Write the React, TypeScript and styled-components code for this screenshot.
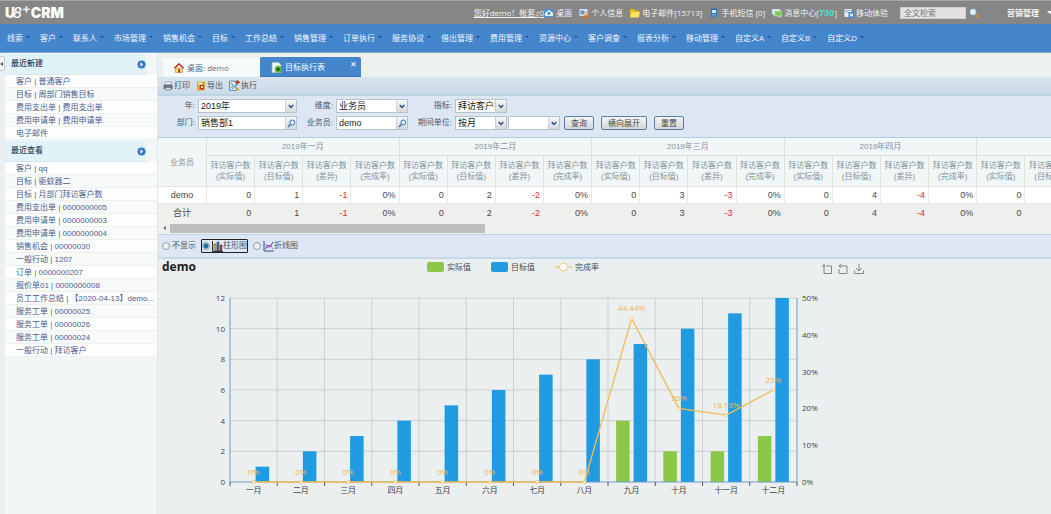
import React from 'react';
import styled, { createGlobalStyle } from 'styled-components';

const GlobalStyle = createGlobalStyle`
  *, *::before, *::after { box-sizing: border-box; }
  body {
    margin: 0;
    background: #ebeff0;
    color: #4c4c4c;
    font: 8px/12px "Liberation Sans", "Noto Sans CJK SC", sans-serif;
    overflow-x: hidden;
  }
  input, select, button { font: inherit; color: inherit; margin: 0; }
  a { color: inherit; text-decoration: none; }
  svg { display: block; flex: none; }
`;

const Page = styled.div`
  display: flex;
  flex-direction: column;
  min-height: 100vh;
`;

/* Top bar */
const TopBar = styled.header`
  display: flex;
  align-items: center;
  height: 24px;
  padding-left: 5px;
  background: #868686;
  border-top: 1px solid #a3a8a6;
  color: #f4f4f4;
  font-family: "Open Sans", "Noto Sans CJK SC", sans-serif;
  white-space: nowrap;
`;
const Logo = styled.h1`
  display: flex;
  align-items: flex-start;
  margin: 0;
  color: #fff;
  font: 900 14px/20px Inter, sans-serif;
`;
const LogoEight = styled.span`
  font-weight: 500;
  font-style: italic;
  margin-left: -2px;
`;
const LogoPlus = styled.span`
  font-size: 13px;
  font-weight: 600;
  line-height: 10px;
`;
const UserLinks = styled.nav`
  display: flex;
  align-items: center;
  gap: 7px;
  margin-left: auto;
`;
const TopLink = styled.a`
  display: flex;
  align-items: center;
  gap: 2px;
`;
const Greeting = styled.a`
  margin-right: -7px;
  text-decoration: underline;
`;
const Count = styled.b`
  color: #45e0cf;
  font-size: 9px;
`;
const SearchForm = styled.form`
  display: flex;
  align-items: center;
  gap: 3px;
  margin-left: 12px;
`;
const SearchBox = styled.input`
  width: 66px;
  height: 12px;
  padding: 0 3px;
  border: 1px solid #cfcfcf;
  background: #e2e2e2;
  color: #777;
  &::placeholder { color: #777; opacity: 1; }
`;
const IconButton = styled.button`
  display: flex;
  padding: 0;
  border: 0;
  background: none;
`;
const RoleMenu = styled.button`
  display: flex;
  align-items: center;
  gap: 8px;
  margin-left: 28px;
  padding: 0;
  border: 0;
  background: none;
  font-weight: 700;
`;

/* Main menu */
const MenuBar = styled.nav`
  display: flex;
  align-items: center;
  gap: 10px;
  height: 29px;
  padding-left: 7px;
  background: #4485cc;
  border-bottom: 1px solid #82acd0;
  color: #f2f7fc;
  font-family: "Open Sans", "Noto Sans CJK SC", sans-serif;
  white-space: nowrap;
`;
const MenuItem = styled.a`
  display: flex;
  align-items: center;
  gap: 3px;
  &::after {
    content: "";
    margin-bottom: 3px;
    border: solid transparent;
    border-width: 2px 2px 0;
    border-top-color: #1d4f8c;
  }
`;

/* Body */
const Body = styled.div`
  display: flex;
  flex: 1;
`;
const Handle = styled.button`
  display: flex;
  align-items: center;
  width: 5px;
  height: 15px;
  margin-top: 3px;
  padding: 0;
  border: 1px solid #c4ccd2;
  border-left: 0;
  border-radius: 0 3px 3px 0;
  background: #f3f5f6;
  &::before {
    content: "";
    border: solid transparent;
    border-width: 2px 3px 2px 0;
    border-right-color: #555;
  }
`;
const Sidebar = styled.aside`
  flex: none;
  width: 153px;
  padding-top: 1px;
  background: #f3f6f6;
  border-right: 1px solid #e2e6e7;
`;
const SideHeading = styled.h2`
  display: flex;
  align-items: center;
  justify-content: space-between;
  height: 21px;
  margin: 0 11px 0 0;
  padding: 0 0 0 6px;
  background: #e1f2f9;
  border-bottom: 1px solid #d6e6ef;
  color: #2f3d55;
  font-size: 8px;
  font-weight: 500;
`;
const SideList = styled.ul`
  margin: 0 0 1px;
  padding: 0;
  list-style: none;
`;
const SideItem = styled.li`
  height: 13px;
  padding-left: 11px;
  background: #fdfdfd;
  border-bottom: 1px solid #eeefef;
  color: #4f5d8a;
  line-height: 13px;
  white-space: nowrap;
  overflow: hidden;
  &:nth-child(even) { background: #f8f9f9; }
`;
const Main = styled.main`
  flex: 1;
  min-width: 0;
`;

/* Tabs and toolbar */
const Tabs = styled.div`
  display: flex;
  align-items: flex-end;
  height: 24px;
  padding-left: 5px;
  background: #ecf0ef;
`;
const Tab = styled.a<{ $active?: boolean }>`
  display: flex;
  align-items: center;
  gap: 3px;
  width: ${p => (p.$active ? 101 : 97)}px;
  height: ${p => (p.$active ? 20 : 19)}px;
  padding-left: 11px;
  padding-top: 1px;
  border-radius: 2px 2px 0 0;
  background: ${p => (p.$active ? '#4485cc' : '#f7fafa')};
  color: ${p => (p.$active ? '#fff' : '#5a6a80')};
  border-bottom: 1px solid ${p => (p.$active ? '#3a75b8' : '#f0f4f6')};
  font-family: "Open Sans", "Noto Sans CJK SC", sans-serif;
`;
const TabClose = styled.span`
  align-self: flex-start;
  margin: 0 4px 0 auto;
`;
const Toolbar = styled.div`
  display: flex;
  align-items: center;
  gap: 6px;
  height: 19px;
  padding-left: 5px;
  background: linear-gradient(#d8e4ef, #cbdae7);
  border-bottom: 2px solid #bdd3e6;
`;
const ToolButton = styled.button`
  display: flex;
  align-items: center;
  gap: 1px;
  padding: 0;
  border: 0;
  background: none;
  color: #44546a;
`;

/* Query form */
const Query = styled.form`
  display: grid;
  grid-template-columns: 37px 99px 33px 72px 41px 1fr;
  column-gap: 3px;
  row-gap: 3px;
  align-items: center;
  padding: 3px 0 7px;
  background: #dde7f4;
  border-bottom: 1px solid #b5cbd9;
`;
const FieldLabel = styled.label`
  text-align: right;
  white-space: nowrap;
  color: #4c5566;
`;
const FieldBox = styled.span<{ $w?: number }>`
  display: flex;
  width: ${p => (p.$w ? `${p.$w}px` : 'auto')};
  height: 14px;
  border: 1px solid #b9c2cb;
  background: #fff;
`;
const Select = styled.select`
  flex: 1;
  min-width: 0;
  padding: 0 0 0 2px;
  border: 0;
  background: none;
  appearance: none;
  color: #222;
  font-size: 9px;
  line-height: 12px;
`;
const TextBox = styled.input`
  flex: 1;
  min-width: 0;
  width: 0;
  padding: 0 2px;
  border: 0;
  background: none;
  color: #222;
  font-size: 9px;
  line-height: 12px;
`;
const Trigger = styled.span`
  display: flex;
  align-items: center;
  justify-content: center;
  width: 11px;
  background: linear-gradient(#f5f6f7, #d6dadd);
  border-left: 1px solid #ccd2d8;
`;
const FieldGroup = styled.div`
  display: flex;
  align-items: center;
  gap: 1px;
`;
const Actions = styled.div`
  display: flex;
  gap: 7px;
  margin-left: 3px;
`;
const ActionButton = styled.button`
  height: 14px;
  padding: 0 6px;
  border: 1px solid #5b7f9f;
  border-radius: 2px;
  background: linear-gradient(#f4f4f4, #d3d6d8);
  line-height: 11px;
  white-space: nowrap;
`;

/* Report table */
const TableArea = styled.div`
  background: #efefed;
`;
const TableScroller = styled.div`
  overflow-x: auto;
  scrollbar-width: none;
`;
const Table = styled.table`
  width: 1012px;
  table-layout: fixed;
  border-collapse: separate;
  border-spacing: 0;
`;
const FirstCol = styled.col`
  width: 49px;
`;
const Th = styled.th<{ $h: number }>`
  height: ${p => p.$h}px;
  padding: 0;
  background: #f1f6f7;
  border: solid #dfe2d9;
  border-width: 0 1px 1px 0;
  color: #82939b;
  font-weight: 400;
  line-height: 11px;
`;
const Td = styled.td<{ $total?: boolean; $name?: boolean; $neg?: boolean }>`
  height: ${p => (p.$total ? 18 : 17)}px;
  padding: 0 ${p => (p.$name ? 0 : 3)}px 0 0;
  background: ${p => (p.$total ? '#efefed' : '#fff')};
  border: solid ${p => (p.$total ? '#efefed' : '#e9eae2')};
  border-width: 0 1px 1px 0;
  color: ${p => (p.$neg ? '#e02a2e' : '#4a4a4a')};
  font-size: 9px;
  line-height: 12px;
  text-align: ${p => (p.$name ? 'center' : 'right')};
`;
const ScrollTrack = styled.div`
  display: flex;
  align-items: center;
  gap: 4px;
  height: 12px;
  padding-left: 5px;
  &::before {
    content: "";
    border: solid transparent;
    border-width: 2px 3px 2px 0;
    border-right-color: #777;
  }
`;
const ScrollThumb = styled.div`
  width: 315px;
  height: 9px;
  background: #bebebe;
`;

/* Chart type choice */
const ChartTypes = styled.div`
  display: flex;
  align-items: center;
  gap: 4px;
  height: 25px;
  padding-left: 3px;
  background: #dde7f4;
  border-top: 1px solid #b8d3ec;
  border-bottom: 2px solid #c6d9e8;
`;
const TypeLabel = styled.label<{ $focused?: boolean }>`
  display: flex;
  align-items: center;
  height: 14px;
  border: 1px solid ${p => (p.$focused ? '#222' : 'transparent')};
  border-radius: 1px;
  color: #4c5566;
`;
const Radio = styled.input`
  appearance: none;
  width: 8px;
  height: 8px;
  margin-right: 2px;
  border: 1px solid #959da4;
  border-radius: 50%;
  background: #eef0f1;
  &:checked { background: radial-gradient(#1a6f9e 0 2px, #dfe9ef 3px); }
`;

/* Chart */
const ChartPanel = styled.section`
  max-width: 711px;
  font-family: "Open Sans", "Noto Sans CJK SC", sans-serif;
`;
const ChartHeader = styled.div`
  display: grid;
  grid-template-columns: 1fr auto 1fr;
  align-items: center;
  height: 16px;
  padding: 0 5px 0 4px;
`;
const ChartTitle = styled.h2`
  margin: 0;
  color: #222;
  font-size: 12px;
  line-height: 16px;
`;
const Legend = styled.div`
  display: flex;
  gap: 20px;
`;
const LegendItem = styled.span`
  display: flex;
  align-items: center;
  gap: 3px;
`;
const Swatch = styled.span<{ $color: string }>`
  width: 17px;
  height: 10px;
  border-radius: 2px;
  background: ${p => p.$color};
`;
const Toolbox = styled.div`
  display: flex;
  gap: 6px;
  justify-content: flex-end;
  padding-top: 4px;
`;
const Plot = styled.svg`
  width: 100%;
  height: auto;
  font-size: 8px;
`;

type IconProps = { w?: number; children: React.ReactNode };
const Icon = ({ w = 10, children }: IconProps) => (
  <svg width={w} height={w} viewBox="0 0 10 10" aria-hidden="true">{children}</svg>
);

const DesktopIcon = () => (
  <Icon><rect y="1" width="10" height="8" fill="#4d90d6" /><path d="M1 5l4-3 4 3v3H1z" fill="#e8f2fb" /><circle cx="5" cy="5.4" r="1.4" fill="#3c7cc4" /></Icon>
);
const PersonIcon = () => (
  <Icon><rect x=".5" y="1" width="8" height="7" fill="#d8e6f6" /><path d="M1.500 2.500h4v4h-4z" fill="#5f94d2" /><circle cx="7" cy="5.200" r="1.700" fill="#f7b267" /><path d="M4.400 9.500c0-3.200 5.200-3.200 5.200 0z" fill="#e8731e" /></Icon>
);
const FolderIcon = () => (
  <Icon><path d="M0 1h4l1 1.500h4v6.500H0z" fill="#e5b91f" /><path d="M1.500 4H10l-1 5.500H.5z" fill="#ffe35c" /></Icon>
);
const PhoneIcon = () => (
  <Icon><rect x="2" y=".5" width="6" height="9" rx="1" fill="#2f6fae" /><rect x="3" y="2" width="4" height="3" fill="#cfe6fa" /><path d="M3 6.500h4M3 8h4" stroke="#9cc5ec" strokeWidth=".7" /></Icon>
);
const ChatIcon = () => (
  <Icon><path d="M0 1h8v5H3L1 7.500V6H0z" fill="#cfe4f4" /><path d="M2.500 3H10v5H8v1.700L6 8H2.500z" fill="#78c850" stroke="#e9f7e0" strokeWidth=".6" /></Icon>
);
const MobileIcon = () => (
  <Icon><path d="M.5 1h7v8h-7z" fill="#e3edf7" /><path d="M1.500 2.500h5M1.500 4h3" stroke="#7b9fca" strokeWidth=".8" /><rect x="4.500" y="4" width="5" height="6" fill="#3d83d0" /><path d="M6 5.500h3v3H6z" fill="#d8eafb" /></Icon>
);
const SearchIcon = () => (
  <Icon><path d="M6 6l3 3" stroke="#e8912d" strokeWidth="1.600" /><circle cx="4" cy="4" r="3" fill="#e5f5ff" stroke="#9fcdea" /></Icon>
);
const HomeIcon = () => (
  <Icon><path d="M1.500 5h7v4.500h-7z" fill="#f8e27a" stroke="#a2761c" strokeWidth=".5" /><path d="M.4 5.300L5 .9l4.600 4.400" fill="none" stroke="#c8281e" strokeWidth="1.500" /><path d="M4 6h2.200v3.500H4z" fill="#c24a20" /></Icon>
);
const ReportIcon = () => (
  <Icon w={11}><path d="M1 .5h6l2 2v7H1z" fill="#f2f7fa" stroke="#a8c0d4" strokeWidth=".5" /><circle cx="6.500" cy="6.500" r="3.200" fill="#55b83a" /><path d="M5.600 4.700l2.900 1.800-2.900 1.800z" fill="#163f10" /></Icon>
);
const PrintIcon = () => (
  <Icon><path d="M2.500 1h6L7.500 4h-6z" fill="#fff" stroke="#6d7880" strokeWidth=".6" /><path d="M.5 4.500L2 3.500h7l.6 1v3.500H.5z" fill="#68757e" /><path d="M2 6.500h6V9H2z" fill="#d3dade" stroke="#505b63" strokeWidth=".5" /></Icon>
);
const ExportIcon = () => (
  <Icon><rect x="1" y=".5" width="8" height="9" fill="#e7a23a" /><path d="M2 1.500h4v2H2z" fill="#fff2c9" /><rect x="3.800" y="4" width="4.200" height="4.500" fill="#b23b24" /><path d="M5 5h2v2H5z" fill="#fbe3a2" /></Icon>
);
const RunIcon = () => (
  <Icon w={11}><path d="M.5 1h6v8.500h-6z" fill="#d6ecfa" stroke="#3d83b8" strokeWidth=".8" /><path d="M2 3l2 2-2 2M3 8l4-4" fill="none" stroke="#2377a8" strokeWidth=".9" /><path d="M7.800 0v4.200M5.700 2.100h4.200" stroke="#dd2424" strokeWidth="1.300" /><path d="M6 6.500l3 3" stroke="#e0a020" strokeWidth="1.500" /></Icon>
);
const ArrowDisc = () => (
  <svg width="9" height="9" viewBox="0 0 9 9" aria-hidden="true"><circle cx="4.500" cy="4.500" r="4" fill="#3478c6" /><path d="M3.500 2.300l2.600 2.200-2.600 2.200z" fill="#fff" /></svg>
);
const Chevron = () => (
  <svg width="6" height="5" viewBox="0 0 6 5" aria-hidden="true"><path d="M.7 1L3 3.500 5.300 1" fill="none" stroke="#27508e" strokeWidth="1.500" /></svg>
);
const Lens = () => (
  <svg width="9" height="9" viewBox="0 0 9 9" aria-hidden="true"><circle cx="5.300" cy="3.500" r="2.500" fill="#e8f4ff" stroke="#3974b8" /><path d="M3.500 5.300L1 8" stroke="#3974b8" strokeWidth="1.500" /></svg>
);
const BarsIcon = () => (
  <svg width="11" height="11" viewBox="0 0 11 11" aria-hidden="true"><path d="M.5 0v10.500H11" fill="none" stroke="#333" /><path d="M2 3h2v7H2z" fill="#e0bd3c" stroke="#333" strokeWidth=".5" /><path d="M5 1h2v9H5z" fill="#4a78cc" stroke="#222" strokeWidth=".5" /><path d="M8 4h2v6H8z" fill="#b04444" stroke="#333" strokeWidth=".5" /></svg>
);
const LinesIcon = () => (
  <svg width="11" height="11" viewBox="0 0 11 11" aria-hidden="true"><path d="M1 0v10h10" fill="none" stroke="#304a9c" /><path d="M2 8l3-4 2 2 3-5" fill="none" stroke="#3448c4" /><path d="M2 3l3 4 2-3 3 4" fill="none" stroke="#c23ba0" strokeWidth=".8" /></svg>
);
const ToolIcon = ({ d }: { d: string }) => (
  <svg width="10" height="10" viewBox="0 0 10 10" fill="none" stroke="#777" strokeWidth=".9" aria-hidden="true"><path d={d} /></svg>
);

const topLinks = [
  { icon: <DesktopIcon />, text: '桌面' },
  { icon: <PersonIcon />, text: '个人信息' },
  { icon: <FolderIcon />, text: '电子邮件[15713]' },
  { icon: <PhoneIcon />, text: '手机短信 [0]' },
  { icon: <ChatIcon />, text: '消息中心[', count: '730' },
  { icon: <MobileIcon />, text: '移动体验' },
];
const menu = ['线索', '客户', '联系人', '市场管理', '销售机会', '目标', '工作总结', '销售管理', '订单执行', '服务协议', '借出管理', '费用管理', '资源中心', '客户调查', '报表分析', '移动管理', '自定义A', '自定义B', '自定义D'];
const created = ['客户 | 普通客户', '目标 | 周部门销售目标', '费用支出单 | 费用支出单', '费用申请单 | 费用申请单', '电子邮件'];
const viewed = ['客户 | qq', '目标 | 驱蚊器二', '目标 | 月部门拜访客户数', '费用支出单 | 0000000005', '费用申请单 | 0000000003', '费用申请单 | 0000000004', '销售机会 | 00000030', '一般行动 | 1207', '订单 | 0000000207', '报价单01 | 0000000008', '员工工作总结 | 【2020-04-13】demo...', '服务工单 | 00000025', '服务工单 | 00000026', '服务工单 | 00000024', '一般行动 | 拜访客户'];
const months = ['一月', '二月', '三月', '四月', '五月'];
const measures = ['实际值', '目标值', '差异', '完成率'];

const chartData = [
  ['一月', 0, 1, 0], ['二月', 0, 2, 0], ['三月', 0, 3, 0], ['四月', 0, 4, 0],
  ['五月', 0, 5, 0], ['六月', 0, 6, 0], ['七月', 0, 7, 0], ['八月', 0, 8, 0],
  ['九月', 4, 9, 44.44], ['十月', 2, 10, 20], ['十一月', 2, 11, 18.18], ['十二月', 3, 12, 25],
] as [string, number, number, number][];

const LEFT = 72;
const RIGHT = 639;
const TOP = 23;
const BASE = 207;
const step = (RIGHT - LEFT) / chartData.length;
const yOf = (v: number) => BASE - (v / 12) * (BASE - TOP);
const yRate = (v: number) => BASE - (v / 50) * (BASE - TOP);
const mid = (i: number) => LEFT + step * (i + 0.5);

const Chart = () => (
  <Plot viewBox="0 0 711 236" role="img" aria-label="demo 目标执行">
    {[2, 4, 6, 8, 10, 12].map(v => (
      <path key={v} d={`M${LEFT} ${yOf(v)}H${RIGHT}`} stroke="#cdd1d2" />
    ))}
    {chartData.slice(1).map((_, i) => (
      <path key={i} d={`M${LEFT + step * (i + 1)} ${TOP}V${BASE}`} stroke="#cdd1d2" />
    ))}
    {chartData.map(([name, actual, target], i) => (
      <g key={name}>
        <rect x={mid(i) - 15.500} y={yOf(actual)} width="13.500" height={BASE - yOf(actual)} fill="#8bc847" />
        <rect x={mid(i) + 2} y={yOf(target)} width="13.500" height={BASE - yOf(target)} fill="#209ae0" />
        <text x={mid(i)} y="218" textAnchor="middle" fill="#444">{name}</text>
      </g>
    ))}
    <path d={`M${LEFT} ${TOP}V${BASE}H${RIGHT}V${TOP}`} fill="none" stroke="#6b9cc8" />
    {Array.from({ length: 13 }, (_, i) => (
      <path key={i} d={`M${LEFT + step * i} ${BASE}v4`} stroke="#4c5a66" />
    ))}
    {[0, 2, 4, 6, 8, 10, 12].map(v => (
      <text key={v} x={LEFT - 5} y={yOf(v) + 3} textAnchor="end" fill="#444">{v}</text>
    ))}
    {[0, 10, 20, 30, 40, 50].map(v => (
      <text key={v} x={RIGHT + 5} y={yRate(v) + 3} fill="#444">{v}%</text>
    ))}
    <polyline points={chartData.map((d, i) => `${mid(i)},${yRate(d[3])}`).join(' ')} fill="none" stroke="#efbd55" strokeWidth="1.300" />
    {chartData.map((d, i) => (
      <g key={d[0]}>
        <circle cx={mid(i)} cy={yRate(d[3])} r="1.500" fill="#fff" stroke="#efbd55" strokeWidth=".8" />
        <text x={mid(i)} y={yRate(d[3]) - 7} textAnchor="middle" fill="#efb548">{d[3]}%</text>
      </g>
    ))}
  </Plot>
);

const SelectField = ({ id, value, w }: { id: string; value: string; w?: number }) => (
  <FieldBox $w={w}>
    <Select id={id} aria-label={value ? undefined : '期间'}><option>{value}</option></Select>
    <Trigger><Chevron /></Trigger>
  </FieldBox>
);
const LookupField = ({ id, value }: { id: string; value: string }) => (
  <FieldBox>
    <TextBox id={id} defaultValue={value} />
    <Trigger><Lens /></Trigger>
  </FieldBox>
);
const DataRow = ({ name, total }: { name: string; total?: boolean }) => (
  <tr>
    <Td $name $total={total}>{name}</Td>
    {months.map((m, i) => (
      <React.Fragment key={m}>
        <Td $total={total}>0</Td>
        <Td $total={total}>{i + 1}</Td>
        <Td $total={total} $neg>-{i + 1}</Td>
        <Td $total={total}>0%</Td>
      </React.Fragment>
    ))}
  </tr>
);
const SideSection = ({ title, items }: { title: string; items: string[] }) => (
  <section>
    <SideHeading>{title}<ArrowDisc /></SideHeading>
    <SideList>{items.map(t => <SideItem key={t}><a href="#">{t}</a></SideItem>)}</SideList>
  </section>
);

export default function App() {
  return (
    <Page>
      <GlobalStyle />
      <TopBar>
        <Logo>U<LogoEight>8</LogoEight><LogoPlus>+</LogoPlus>CRM</Logo>
        <UserLinks>
          <Greeting href="#">您好demo！帐套:(0</Greeting>
          {topLinks.map(l => (
            <TopLink key={l.text} href="#">
              {l.icon}
              <span>{l.text}{l.count && <><Count>{l.count}</Count>]</>}</span>
            </TopLink>
          ))}
        </UserLinks>
        <SearchForm>
          <SearchBox aria-label="全文检索" placeholder="全文检索" />
          <IconButton type="button" aria-label="搜索"><SearchIcon /></IconButton>
        </SearchForm>
        <RoleMenu type="button">
          营销管理
          <svg width="4" height="3" viewBox="0 0 4 3" aria-hidden="true"><path d="M0 0h6L3 3z" fill="#fff" /></svg>
        </RoleMenu>
      </TopBar>
      <MenuBar>{menu.map(m => <MenuItem key={m} href="#">{m}</MenuItem>)}</MenuBar>
      <Body>
        <Handle aria-label="收起" />
        <Sidebar>
          <SideSection title="最近新建" items={created} />
          <SideSection title="最近查看" items={viewed} />
        </Sidebar>
        <Main>
          <Tabs>
            <Tab href="#"><HomeIcon />桌面: demo</Tab>
            <Tab href="#" $active><ReportIcon />目标执行表<TabClose>✕</TabClose></Tab>
          </Tabs>
          <Toolbar>
            <ToolButton><PrintIcon />打印</ToolButton>
            <ToolButton><ExportIcon />导出</ToolButton>
            <ToolButton><RunIcon />执行</ToolButton>
          </Toolbar>
          <Query>
            <FieldLabel htmlFor="year">年:</FieldLabel>
            <SelectField id="year" value="2019年" />
            <FieldLabel htmlFor="dimension">维度:</FieldLabel>
            <SelectField id="dimension" value="业务员" />
            <FieldLabel htmlFor="measure">指标:</FieldLabel>
            <SelectField id="measure" value="拜访客户数" w={52} />
            <FieldLabel htmlFor="dept">部门:</FieldLabel>
            <LookupField id="dept" value="销售部1" />
            <FieldLabel htmlFor="staff">业务员:</FieldLabel>
            <LookupField id="staff" value="demo" />
            <FieldLabel htmlFor="unit">期间单位:</FieldLabel>
            <FieldGroup>
              <SelectField id="unit" value="按月" w={52} />
              <SelectField id="period" value="" w={52} />
              <Actions>
                <ActionButton type="button">查询</ActionButton>
                <ActionButton type="button">横向展开</ActionButton>
                <ActionButton type="button">重置</ActionButton>
              </Actions>
            </FieldGroup>
          </Query>
          <TableArea>
            <TableScroller>
              <Table>
                <colgroup>
                  <FirstCol />
                  {months.map(m => measures.map(k => <col key={m + k} />))}
                </colgroup>
                <thead>
                  <tr>
                    <Th $h={49} rowSpan={2}>业务员</Th>
                    {months.map(m => <Th key={m} $h={18} colSpan={4}>2019年{m}</Th>)}
                  </tr>
                  <tr>
                    {months.map(m => measures.map(k => (
                      <Th key={m + k} $h={31}>拜访客户数<br />({k})</Th>
                    )))}
                  </tr>
                </thead>
                <tbody>
                  <DataRow name="demo" />
                  <DataRow name="合计" total />
                </tbody>
              </Table>
            </TableScroller>
            <ScrollTrack><ScrollThumb /></ScrollTrack>
          </TableArea>
          <ChartTypes>
            <TypeLabel><Radio type="radio" name="type" />不显示</TypeLabel>
            <TypeLabel $focused><Radio type="radio" name="type" defaultChecked /><BarsIcon />柱形图</TypeLabel>
            <TypeLabel><Radio type="radio" name="type" /><LinesIcon />折线图</TypeLabel>
          </ChartTypes>
          <ChartPanel>
            <ChartHeader>
              <ChartTitle>demo</ChartTitle>
              <Legend>
                <LegendItem><Swatch $color="#8bc847" />实际值</LegendItem>
                <LegendItem><Swatch $color="#209ae0" />目标值</LegendItem>
                <LegendItem>
                  <svg width="17" height="10" viewBox="0 0 17 10" aria-hidden="true"><path d="M0 5h17" stroke="#efbd55" /><circle cx="8.500" cy="5" r="4" fill="#fff" stroke="#efc878" /></svg>
                  完成率
                </LegendItem>
              </Legend>
              <Toolbox>
                <IconButton aria-label="区域缩放"><ToolIcon d="M0 2h3M2 0v9.500h7.500V2H4" /></IconButton>
                <IconButton aria-label="缩放还原"><ToolIcon d="M3 0L1 2l2 2M1 2h8v7.500H1V5" /></IconButton>
                <IconButton aria-label="保存为图片"><ToolIcon d="M5 0v7M2 4l3 3 3-3M.5 6.500v3h9v-3" /></IconButton>
              </Toolbox>
            </ChartHeader>
            <Chart />
          </ChartPanel>
        </Main>
      </Body>
    </Page>
  );
}
